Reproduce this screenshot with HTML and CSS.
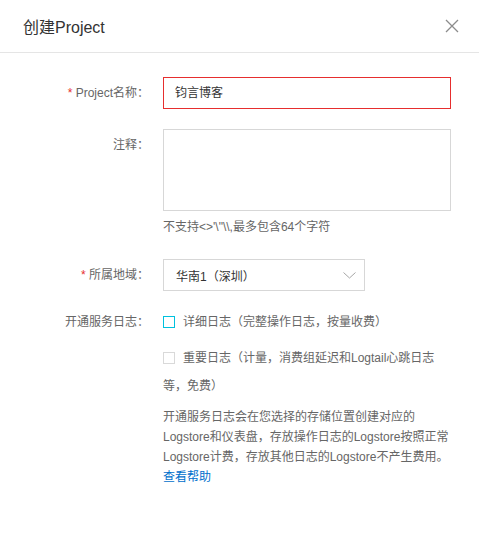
FILE: index.html
```html
<!DOCTYPE html>
<html lang="zh-CN">
<head>
<meta charset="utf-8">
<title>创建Project</title>
<link rel="stylesheet" href="styles.css">
</head>
<body>
<div class="dialog">
  <div class="header">
    <span class="title">创建Project</span>
    <svg class="close" width="14" height="14" viewBox="0 0 14 14"><path d="M1 1L13 13M13 1L1 13" stroke="#8c8c8c" stroke-width="1.3" fill="none"/></svg>
  </div>
  <div class="form">
    <div class="row row-name">
      <div class="label"><span class="req">*</span> Project名称：</div>
      <div class="control"><div class="input error">钧言博客</div></div>
    </div>
    <div class="row row-note">
      <div class="label">注释：</div>
      <div class="control">
        <div class="textarea"></div>
        <div class="hint">不支持&lt;&gt;'\"\\,最多包含64个字符</div>
      </div>
    </div>
    <div class="row row-region">
      <div class="label"><span class="req">*</span> 所属地域：</div>
      <div class="control">
        <div class="select"><span>华南1（深圳）</span>
          <svg class="chev" width="13" height="7" viewBox="0 0 13 7"><path d="M0.5 0.5L6.5 6L12.5 0.5" stroke="#a6a6a6" stroke-width="1" fill="none"/></svg>
        </div>
      </div>
    </div>
    <div class="row row-log">
      <div class="label label-log">开通服务日志：</div>
      <div class="control">
        <div class="check-item"><span class="box box-active"></span>详细日志（完整操作日志，按量收费）</div>
        <div class="check-item item2"><span class="box"></span>重要日志（计量，消费组延迟和Logtail心跳日志等，免费）</div>
        <p class="desc">开通服务日志会在您选择的存储位置创建对应的Logstore和仪表盘，存放操作日志的Logstore按照正常Logstore计费，存放其他日志的Logstore不产生费用。<a class="link" href="#">查看帮助</a></p>
      </div>
    </div>
  </div>
</div>
</body>
</html>
```
FILE: styles.css
```css
* { box-sizing: border-box; }
body {
  margin: 0;
  background: #fff;
  font-family: "Liberation Sans", "Noto Sans CJK SC", sans-serif;
  font-size: 12px;
  color: #666;
}
.dialog { width: 479px; }
.header {
  height: 53px;
  border-bottom: 1px solid #e5e5e5;
  display: flex;
  align-items: center;
  justify-content: space-between;
  padding: 0 20px 1px 23px;
}
.title { font-size: 16px; color: #333; }
.close { display: block; margin-top: 1px; }
.form { padding-top: 24px; }
.row {
  display: grid;
  grid-template-columns: 149px 288px;
  column-gap: 14px;
}
.label {
  text-align: right;
  line-height: 32px;
  color: #666;
}
.req { color: #e62e2e; }
.label-log { line-height: 28px; }
.row-note { margin-top: 20px; }
.row-region { margin-top: 23px; }
.row-log { margin-top: 17px; }
.input {
  height: 32px;
  border: 1px solid #d7d7d7;
  padding: 0 11px;
  line-height: 30px;
  color: #333;
}
.input.error { border-color: #e62e2e; }
.textarea {
  height: 82px;
  border: 1px solid #d7d7d7;
}
.hint {
  margin-top: 7px;
  line-height: 18px;
  color: #666;
}
.select {
  width: 202px;
  height: 32px;
  border: 1px solid #d7d7d7;
  padding: 0 8px 0 12px;
  display: flex;
  align-items: center;
  justify-content: space-between;
  color: #333;
}
.chev { display: block; }
.check-item {
  line-height: 28px;
  color: #666;
}
.item2 { margin-top: 8px; }
.box {
  display: inline-block;
  width: 12px;
  height: 12px;
  border: 1px solid #d9d9d9;
  vertical-align: -2px;
  margin-right: 8px;
}
.box-active { border-color: #00c1de; }
.desc {
  margin: 7px 0 0;
  line-height: 20px;
  color: #666;
}
.link { color: #0070cc; text-decoration: none; }
```
